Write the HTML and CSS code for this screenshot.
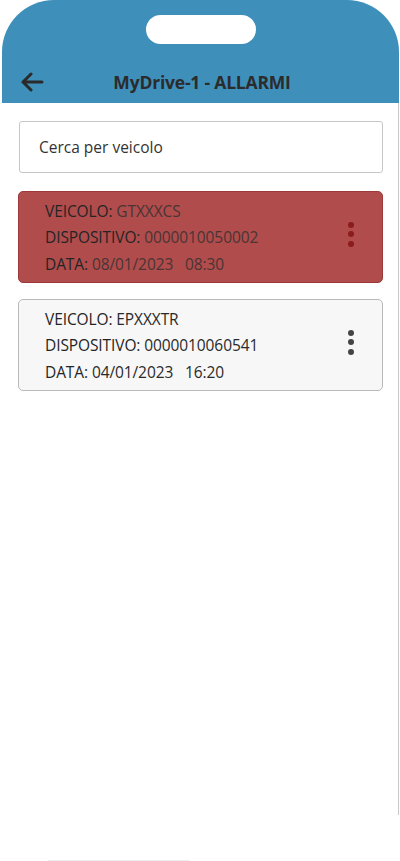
FILE: index.html
```html
<!DOCTYPE html>
<html lang="it">
<head>
<meta charset="utf-8">
<link rel="stylesheet" href="styles.css">
</head>
<body>
<div class="phone">
  <header class="header">
    <div class="notch"></div>
    <div class="bar">
      <svg class="back" width="24" height="20" viewBox="0 0 24 20"><path d="M22 10H3M11 2L3 10l8 8" fill="none" stroke="#2a2a2a" stroke-width="3" stroke-linecap="round" stroke-linejoin="round"/></svg>
      <h1 class="title">MyDrive-1 - ALLARMI</h1>
    </div>
  </header>
  <main class="content">
    <div class="search">Cerca per veicolo</div>
    <div class="card alarm">
      <div class="info">
        <div class="line"><span class="lbl">VEICOLO:</span> <span class="val">GTXXXCS</span></div>
        <div class="line"><span class="lbl">DISPOSITIVO:</span> <span class="val">0000010050002</span></div>
        <div class="line"><span class="lbl">DATA:</span> <span class="val">08/01/2023&nbsp;&nbsp; 08:30</span></div>
      </div>
      <div class="dots"><i></i><i></i><i></i></div>
    </div>
    <div class="card normal">
      <div class="info">
        <div class="line"><span class="lbl">VEICOLO:</span> <span class="val">EPXXXTR</span></div>
        <div class="line"><span class="lbl">DISPOSITIVO:</span> <span class="val">0000010060541</span></div>
        <div class="line"><span class="lbl">DATA:</span> <span class="val">04/01/2023&nbsp;&nbsp; 16:20</span></div>
      </div>
      <div class="dots"><i></i><i></i><i></i></div>
    </div>
  </main>
  <div class="home"></div>
</div>
</body>
</html>
```
FILE: styles.css
```css
html, body { margin: 0; padding: 0; background: #fff; }
body { font-family: "Open Sans", "Liberation Sans", sans-serif; color: #2a2a2a; }
.phone { width: 400px; height: 861px; position: relative; overflow: hidden; }
.header {
  margin: 0 1px 0 2px;
  height: 103px;
  background: #3f8fbb;
  border-radius: 52px 52px 0 0;
  display: flex;
  flex-direction: column;
  align-items: center;
  box-sizing: border-box;
  padding-top: 15px;
}
.notch { width: 110px; height: 29px; background: #fff; border-radius: 15px; }
.bar { width: 100%; display: flex; align-items: center; height: 40px; margin-top: 18px; position: relative; }
.back { position: absolute; left: 18px; top: 10px; }
.title { margin: 0 auto; font-size: 17.5px; font-weight: 700; color: #2b2b2b; letter-spacing: -0.2px; padding-left: 3px; }
.content {
  height: 712px;
  border-right: 1px solid #c9c9c9;
  margin-right: 1px;
  padding: 18px 15px 0 18px;
  box-sizing: border-box;
  display: flex;
  flex-direction: column;
  gap: 16px;
}
.search {
  height: 52px;
  border: 1px solid #c6c6c6;
  border-radius: 3px;
  margin-left: 1px;
  box-sizing: border-box;
  padding: 0 19px;
  display: flex;
  align-items: center;
  font-size: 15.5px;
  color: #333;
  margin-bottom: 2px;
}
.card {
  height: 92px;
  border-radius: 5px;
  box-sizing: border-box;
  display: flex;
  align-items: center;
  padding: 0 28px 0 26px;
}
.alarm { background: #b04c4c; border: 1px solid #9c3a3a; }
.normal { background: #f7f7f7; border: 1px solid #b9b9b9; }
.info { flex: 1; display: flex; flex-direction: column; gap: 4.5px; }
.line { font-size: 15.5px; line-height: 22px; letter-spacing: -0.1px; white-space: nowrap; }
.lbl { color: #242424; }
.alarm .val { color: #4a3434; }
.normal .val { color: #2a2a2a; }
.dots { display: flex; flex-direction: column; gap: 3.5px; margin-top: -6px; }
.dots i { display: block; width: 6px; height: 6px; border-radius: 50%; }
.alarm .dots i { background: #8b1c1c; }
.normal .dots i { background: #444; }
.home { position: absolute; left: 48px; bottom: 0; width: 142px; height: 1px; background: #eee; }
```
